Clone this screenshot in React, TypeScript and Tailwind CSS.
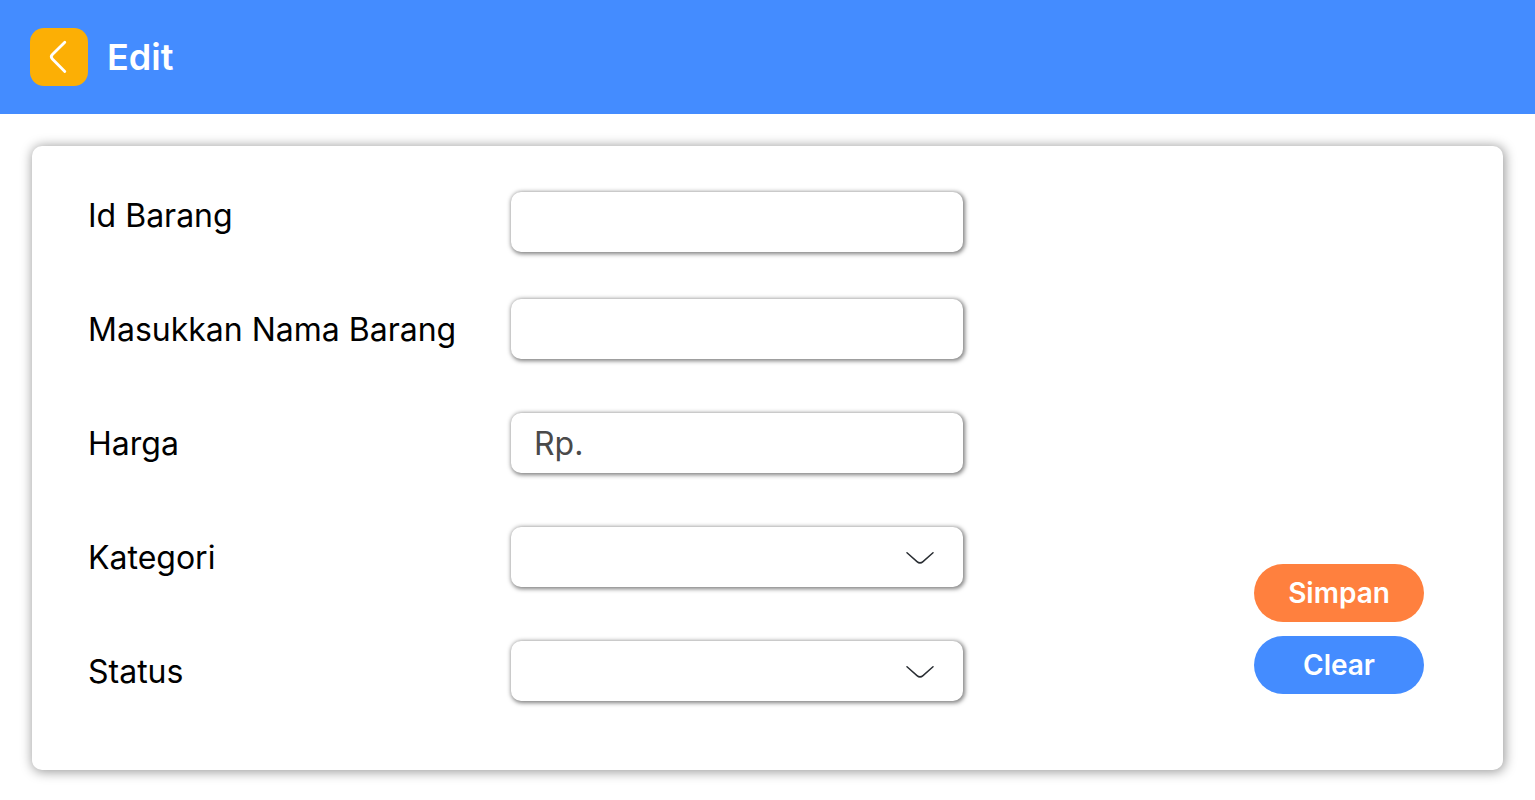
import type { ReactNode } from "react";

const controlClass =
  "block h-[60px] w-full appearance-none rounded-[10px] bg-white px-[23px] text-[32px] leading-10 text-[#4a4a4a] placeholder:text-[#4a4a4a] shadow-[1px_1px_4px_1px_rgba(0,0,0,0.5)] outline-none focus-visible:ring-2 focus-visible:ring-[#448cff]";

type FieldProps = {
  id: string;
  label: string;
  className?: string;
  children: ReactNode;
};

function Field({ id, label, className = "", children }: FieldProps) {
  return (
    <div className="flex h-[114px] items-center">
      <label htmlFor={id} className="w-[423px] shrink-0 pt-0.5 text-[32px] leading-10">
        {label}
      </label>
      <div className={`w-full max-w-[452px] ${className}`}>{children}</div>
    </div>
  );
}

function SelectBox({ id, options }: { id: string; options: string[] }) {
  return (
    <div className="relative">
      <select id={id} name={id} defaultValue="" className={controlClass}>
        <option value=""></option>
        {options.map((option) => (
          <option key={option}>{option}</option>
        ))}
      </select>
      <svg
        aria-hidden="true"
        viewBox="0 0 28 14"
        fill="none"
        stroke="#292d32"
        strokeWidth="1.5"
        strokeLinecap="round"
        strokeLinejoin="round"
        className="pointer-events-none absolute top-6 right-[29px] h-[14px] w-7"
      >
        <path d="M1 1.8 L11 10.6 Q14 13.2 17 10.6 L27 1.8" />
      </svg>
    </div>
  );
}

export default function App() {
  return (
    <div className="min-h-screen bg-white font-['Inter',sans-serif] text-black">
      <header className="flex h-[114px] items-center gap-[19px] bg-[#448cff] px-[30px]">
        <button
          type="button"
          aria-label="Kembali"
          className="flex size-[58px] items-center justify-center rounded-[14px] bg-[#fcaf05]"
        >
          <svg
            aria-hidden="true"
            viewBox="0 0 58 58"
            fill="none"
            stroke="white"
            strokeWidth="2.8"
            strokeLinecap="round"
            strokeLinejoin="round"
            className="size-[58px]"
          >
            <path d="M34.8 14.2 L22.4 26.6 Q20.2 28.8 22.4 31 L34.8 43.6" />
          </svg>
        </button>
        <h1 className="text-4xl font-semibold text-white">Edit</h1>
      </header>

      <main className="p-8 pb-[30px]">
        <form className="flex items-end justify-between rounded-[10px] bg-white pt-3 pr-[79px] pb-[42px] pl-14 shadow-[1px_1px_12px_1px_rgba(0,0,0,0.4)]">
          <div className="grow">
            <Field id="id-barang" label="Id Barang" className="mt-[14px]">
              <input id="id-barang" name="id-barang" type="text" className={controlClass} />
            </Field>
            <Field id="nama-barang" label="Masukkan Nama Barang">
              <input id="nama-barang" name="nama-barang" type="text" className={controlClass} />
            </Field>
            <Field id="harga" label="Harga">
              <input id="harga" name="harga" type="text" placeholder="Rp." className={controlClass} />
            </Field>
            <Field id="kategori" label="Kategori">
              <SelectBox id="kategori" options={["Makanan", "Minuman"]} />
            </Field>
            <Field id="status" label="Status">
              <SelectBox id="status" options={["Tersedia", "Habis"]} />
            </Field>
          </div>
          <div className="mb-[34px] flex w-[170px] shrink-0 flex-col gap-[14px] text-[28px] font-semibold text-white">
            <button type="submit" className="h-[58px] rounded-full bg-[#ff803e]">
              Simpan
            </button>
            <button type="reset" className="h-[58px] rounded-full bg-[#448cff]">
              Clear
            </button>
          </div>
        </form>
      </main>
    </div>
  );
}
